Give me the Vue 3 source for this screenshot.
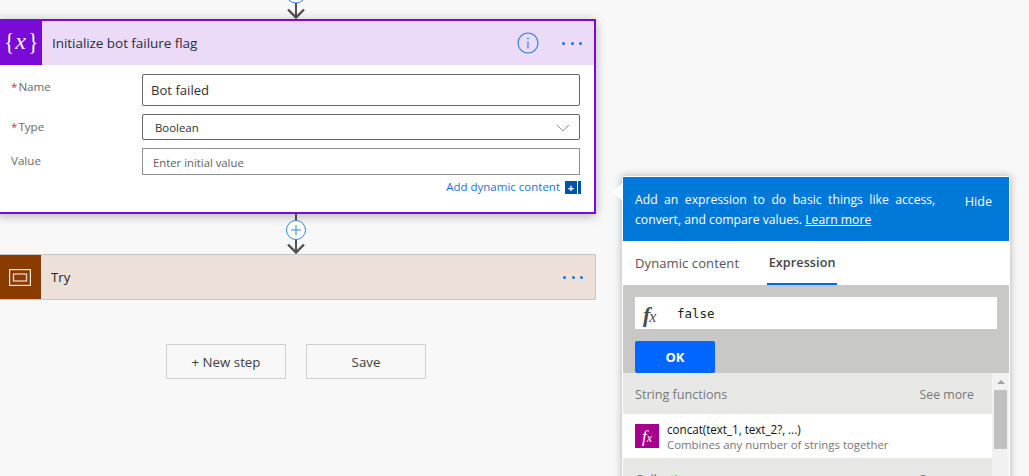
<script setup>
const fields = [
  { label: 'Name', required: true, kind: 'name', value: 'Bot failed' },
  { label: 'Type', required: true, kind: 'type', value: 'Boolean' },
  { label: 'Value', required: false, kind: 'val', value: 'Enter initial value' }
]
</script>

<template>
  <div class="canvas">
    <div class="flow">
      <div class="conn-top">
        <svg width="24" height="19" viewBox="0 0 24 19">
          <circle cx="12" cy="-7" r="10" fill="#fff" stroke="#2b88d8" />
          <path d="M12 3V17" stroke="#505050" stroke-width="2" fill="none" />
          <path d="M4 9.5L12 17.5L20 9.5" stroke="#505050" stroke-width="2.4" fill="none" />
        </svg>
      </div>

      <section class="card">
        <header class="card-head">
          <div class="card-icon">
            <span class="brace">{</span><span class="xvar">x</span><span class="brace">}</span>
          </div>
          <div class="card-title">Initialize bot failure flag</div>
          <svg class="info" width="22" height="22" viewBox="0 0 22 22">
            <circle cx="11" cy="11" r="10" fill="none" stroke="#1f7fd6" stroke-width="1.1" />
            <path d="M11 9.5V16.5" stroke="#1f7fd6" stroke-width="1.1" />
            <circle cx="11" cy="6.6" r="0.8" fill="#1f7fd6" />
          </svg>
          <div class="dots"><i></i><i></i><i></i></div>
        </header>
        <div class="card-body">
          <div v-for="f in fields" :key="f.label" class="row" :class="'row-' + f.kind">
            <label class="lab"><span v-if="f.required" class="star">*</span>{{ f.label }}</label>
            <div class="box" :class="'box-' + f.kind">
              <span>{{ f.value }}</span>
              <svg v-if="f.kind === 'type'" width="14" height="8" viewBox="0 0 14 8">
                <path d="M1 1L7 7L13 1" fill="none" stroke="#a8917f" stroke-width="1" />
              </svg>
            </div>
          </div>
          <div class="dyn">
            <span>Add dynamic content</span>
            <span class="dyn-icon"><b>+</b></span>
          </div>
        </div>
      </section>

      <div class="conn-mid">
        <svg width="24" height="40" viewBox="0 0 24 40">
          <path d="M12 0V39" stroke="#505050" stroke-width="2" fill="none" />
          <circle cx="12" cy="16" r="9.5" fill="#fff" stroke="#2b88d8" />
          <path d="M7 16H17M12 11V21" stroke="#2b88d8" stroke-width="1" fill="none" />
          <path d="M4 30.5L12 38.5L20 30.5" stroke="#505050" stroke-width="2.4" fill="none" />
        </svg>
      </div>

      <section class="try">
        <div class="try-icon">
          <svg width="22" height="17" viewBox="0 0 22 17">
            <rect x="0.6" y="0.6" width="20.8" height="15.8" fill="none" stroke="#f6ebe3" stroke-width="1.2" />
            <rect x="4.5" y="5" width="13" height="7" fill="none" stroke="#e6c9b3" stroke-width="1.4" />
          </svg>
        </div>
        <div class="try-title">Try</div>
        <div class="dots"><i></i><i></i><i></i></div>
      </section>

      <div class="actions">
        <button class="act">+ New step</button>
        <button class="act">Save</button>
      </div>
    </div>

    <aside class="panel">
      <span class="notch"></span>
      <div class="banner">
        <p class="banner-text">
          <span class="line-1">Add an expression to do basic things like access,</span>
          convert, and compare values. <a>Learn more</a>
        </p>
        <span class="hide">Hide</span>
      </div>
      <nav class="tabs">
        <span class="tab">Dynamic content</span>
        <span class="tab active">Expression</span>
      </nav>
      <div class="editor">
        <div class="expr">
          <span class="fx">f<span class="fx-x">x</span></span>
          <span class="code">false</span>
        </div>
        <button class="ok">OK</button>
      </div>
      <div class="list">
        <div class="list-main">
          <div class="group">
            <span>String functions</span>
            <span class="see">See more</span>
          </div>
          <div class="item">
            <span class="item-icon">f<span class="item-x">x</span></span>
            <div class="item-text">
              <div class="item-name">concat(text_1, text_2?, ...)</div>
              <div class="item-desc">Combines any number of strings together</div>
            </div>
          </div>
          <div class="group">
            <span>Collection</span>
            <span class="see">See more</span>
          </div>
        </div>
        <div class="scroll">
          <span class="up"></span>
          <span class="thumb"></span>
        </div>
      </div>
    </aside>
  </div>
</template>

<style>
html, body { margin: 0; background: #f8f8f8; overflow: hidden; }
</style>

<style scoped>
.canvas {
  position: relative;
  width: 1029px;
  height: 476px;
  overflow: hidden;
  background: #f8f8f8;
  font-family: "Open Sans", "Noto Sans", sans-serif;
  color: #252423;
}
.flow { width: 600px; margin-left: -4px; display: flex; flex-direction: column; align-items: center; }
.conn-top { height: 19px; display: flex; justify-content: center; }
.conn-mid { height: 40px; display: flex; justify-content: center; }
.conn-mid svg, .conn-top svg { display: block; }

.card {
  width: 600px;
  box-sizing: border-box;
  border: 2px solid #7a0bd6;
  background: #fff;
  box-shadow: 0 2px 10px rgba(0, 0, 0, 0.28);
  height: 195px;
}
.card-head { height: 44px; background: #ebdbf8; display: flex; align-items: center; }
.card-icon {
  width: 42px; margin-left: 2px; height: 44px; background: #7a0bd6; color: #fff; flex: none;
  display: flex; align-items: center; justify-content: center;
  font-family: "Liberation Serif", serif;
}
.brace { font-size: 26px; line-height: 1; font-weight: 400; margin-top: -3px; transform: scaleX(0.8); }
.xvar { font-size: 24px; font-style: italic; margin: -3px 1px 0 0; }
.card-title { margin-left: 10px; font-size: 13.5px; color: #1f2d3d; flex: 1; letter-spacing: -0.05px; }
.info { margin-right: 23px; display: block; }
.dots { display: flex; gap: 5.5px; margin-right: 12px; }
.dots i { width: 3px; height: 3px; border-radius: 50%; background: #0f78e0; display: block; }

.card-body { padding: 9px 0 0 13px; position: relative; }
.row { display: flex; }
.lab { width: 131px; font-size: 11.6px; color: #6b6967; line-height: 16px; margin-top: 5px; }
.star { color: #d13438; margin-right: 1px; }
.box {
  width: 438px; box-sizing: border-box; border: 1px solid #666; border-radius: 2px;
  display: flex; align-items: center; justify-content: space-between;
}
.box-name { height: 32px; padding-left: 8px; font-size: 13.1px; color: #323130; margin-bottom: 8px; }
.box-type { height: 26px; padding: 1px 9px 0 12px; font-size: 11.4px; color: #323130; margin-bottom: 8px; }
.box-val { height: 27px; padding: 1px 0 0 10px; font-size: 11.3px; color: #605e5c; border-color: #919191; border-radius: 0; }
.dyn {
  display: flex; justify-content: flex-end; align-items: center; gap: 5px;
  margin: 4px 13px 0 0; font-size: 11.5px; color: #1a73d9; height: 16px; line-height: 16px;
}
.dyn-icon {
  width: 12px; height: 13px; margin-right: 4px; background: #0052a8; position: relative; color: #fff;
  display: flex; align-items: center; justify-content: center;
}
.dyn-icon::after { content: ""; position: absolute; right: -4px; top: 0; bottom: 0; width: 3px; background: #0052a8; }
.dyn-icon b { font-size: 11px; line-height: 13px; font-weight: 700; }

.try {
  width: 600px; height: 46px; box-sizing: border-box; border: 1px solid #c8c6c4;
  background: #ede0d9; display: flex; align-items: center;
}
.try-icon {
  width: 41px; margin-left: 3px; height: 44px; background: #8a3b00; flex: none; padding-right: 2px; box-sizing: border-box;
  display: flex; align-items: center; justify-content: center;
}
.try-title { margin-left: 10px; flex: 1; font-size: 13.2px; color: #252423; margin-top: -1px; }

.actions { display: flex; gap: 20px; margin-top: 44px; margin-left: -20px; padding-left: 20px; }
.act {
  width: 120px; height: 35px; box-sizing: border-box; background: #f8f8f8;
  border: 1px solid #cfcfcf; font: inherit; font-size: 13.3px; color: #3d3d3d; padding: 0;
}

.panel {
  position: absolute; left: 622px; top: 176px; width: 388px; height: 321px; box-sizing: border-box;
  background: #fff; border: 1px solid #fff; border-bottom: 0; box-shadow: 0 0 8px rgba(0, 0, 0, 0.3);
}
.notch {
  position: absolute; left: -11px; top: 6px; width: 0; height: 0;
  border-top: 9px solid transparent; border-bottom: 9px solid transparent; border-right: 11px solid #fff;
}
.banner {
  height: 64px; box-sizing: border-box; background: #0078d7; color: #fff; display: flex;
  justify-content: space-between; padding: 13px 17px 0 12px; font-size: 12.2px; line-height: 20px;
}
.banner-text { margin: 0; width: 310px; }
.line-1 { display: block; word-spacing: 3.3px; white-space: nowrap; }
.banner-text a { text-decoration: underline; }
.hide { margin-top: 2px; font-size: 12.6px; }
.tabs { height: 44px; display: flex; gap: 28px; padding-left: 12px; font-size: 13px; color: #555; }
.tab { line-height: 44px; height: 44px; box-sizing: border-box; letter-spacing: 0.1px; }
.tab.active { font-weight: 600; color: #444; border-bottom: 2px solid #0066ff; width: 70px; white-space: nowrap; display: flex; justify-content: center; font-size: 12.6px; }
.editor { height: 88px; box-sizing: border-box; background: #c8c9c6; padding: 12px 12px 0; }
.expr { height: 32px; background: #fff; display: flex; align-items: center; }
.fx { font-family: "Liberation Serif", serif; font-style: italic; font-weight: 700; font-size: 22px; width: 42px; padding-left: 8px; box-sizing: border-box; color: #4a4a4a; line-height: 1; margin-top: 3px; }
.fx-x { font-size: 16px; font-weight: 400; margin-left: -1px; }
.code { font-family: "DejaVu Sans Mono", monospace; font-size: 12.5px; color: #222; }
.ok {
  display: block; margin-top: 12px; width: 80px; height: 32px; border: 0; border-radius: 2px;
  background: #0066ff; color: #fff; font: inherit; font-weight: 700; font-size: 13px; padding: 0;
}
.list { display: flex; height: 103px; overflow: hidden; background: #f1f1f1; }
.list-main { width: 369px; }
.group {
  height: 41px; box-sizing: border-box; background: #e8e9e7; display: flex; justify-content: space-between;
  align-items: center; padding: 2px 18px 0 12px; font-size: 12.6px; color: #777;
}
.see { font-size: 12.3px; }
.item { height: 44px; background: #fff; display: flex; align-items: center; padding-left: 12px; }
.item-icon {
  width: 24px; height: 24px; background: #a6008c; color: #fff; display: flex; align-items: center; justify-content: center;
  font-family: "Liberation Serif", serif; font-style: italic; font-size: 17px; line-height: 1;
  flex: none;
}
.item-x { font-size: 12px; margin-top: 3px; }
.item-text { margin-left: 8px; padding-top: 1px; }
.item-name { font-size: 11.7px; line-height: 16px; color: #111; font-weight: 500; letter-spacing: -0.05px; }
.item-desc { font-size: 11.4px; line-height: 16px; color: #767676; }
.scroll { position: relative; flex: 1; background: #f1f1f1; }
.up {
  position: absolute; left: 5px; top: 7px; width: 0; height: 0;
  border-left: 4px solid transparent; border-right: 4px solid transparent; border-bottom: 4px solid #a3a3a3;
}
.thumb { position: absolute; left: 2px; top: 17px; width: 13px; height: 59px; background: #c1c1c1; }
</style>
